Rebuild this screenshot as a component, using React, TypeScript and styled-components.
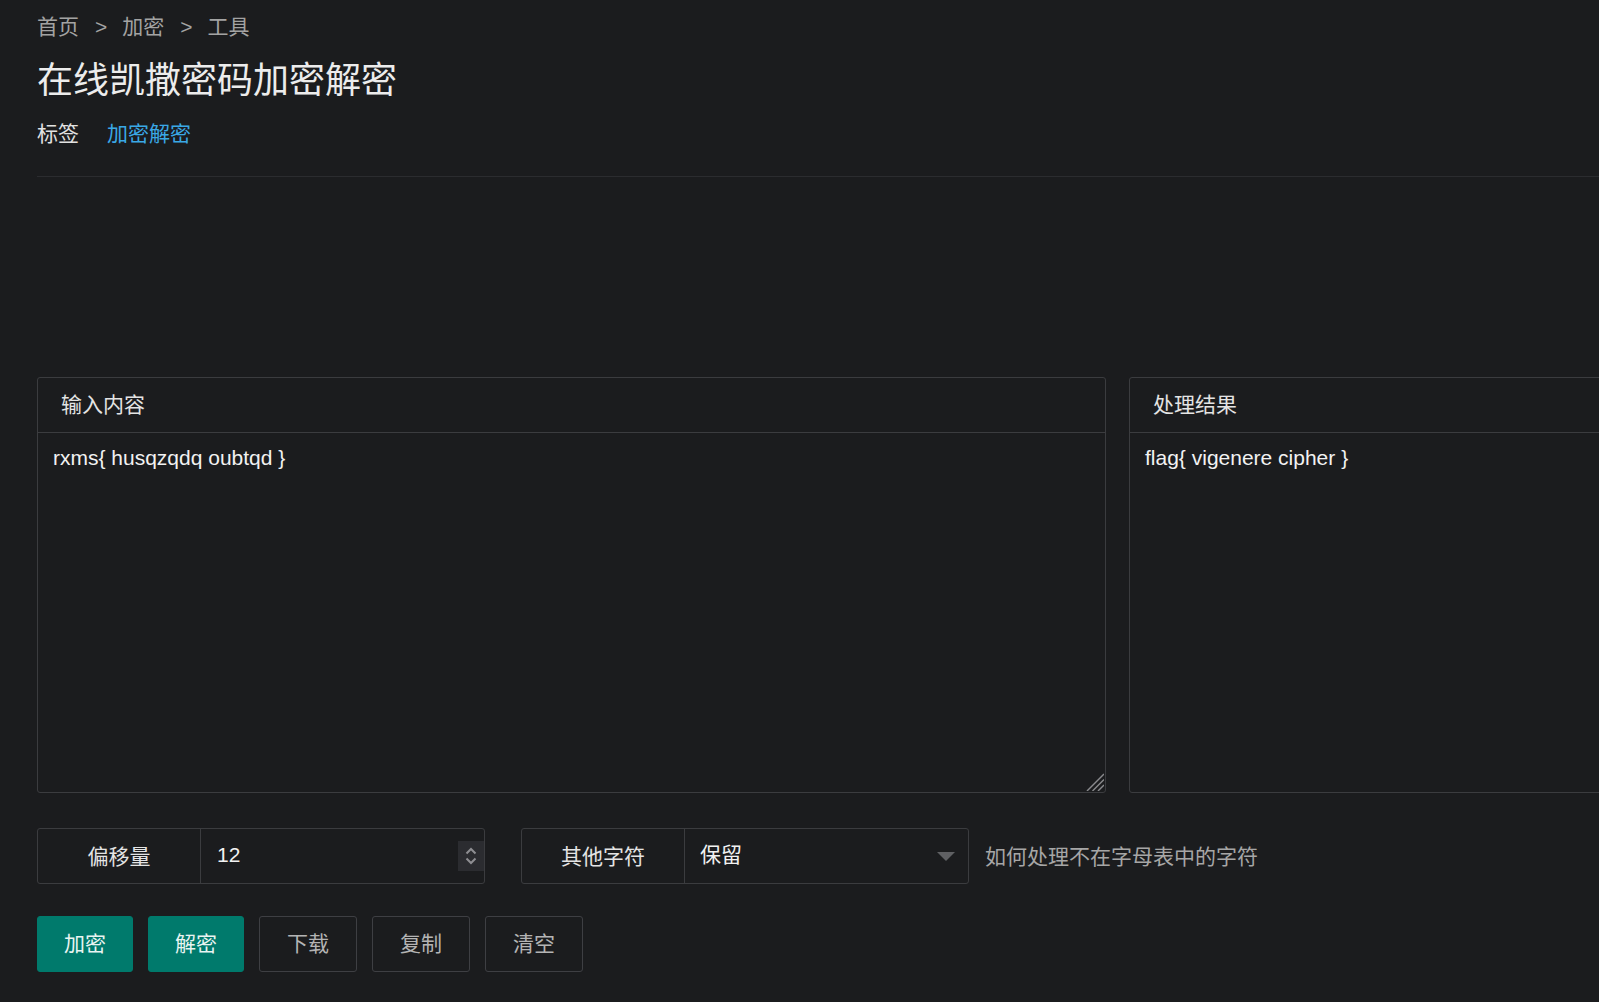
import React from 'react';
import styled, { createGlobalStyle } from 'styled-components';

const GlobalStyle = createGlobalStyle`
  html, body {
    margin: 0;
    padding: 0;
    background: #1b1c1e;
    overflow: hidden;
  }
  body {
    font-family: "Liberation Sans", "Noto Sans CJK SC", sans-serif;
    color: #e6e6e6;
  }
`;

const PANEL_W = 1069;

const Page = styled.div`
  width: ${PANEL_W * 2 + 23}px;
  padding: 11px 0 40px 37px;
`;

const Breadcrumb = styled.nav`
  display: flex;
  align-items: center;
  font-size: 21px;
  line-height: 32px;
  color: #a3a3a3;
`;

const Sep = styled.span`
  margin: 0 15px 0 16px;
`;

const Title = styled.h1`
  margin: 13px 0 0;
  font-size: 36px;
  line-height: 50px;
  font-weight: 400;
  color: #ececec;
`;

const Tags = styled.div`
  display: flex;
  gap: 28px;
  margin-top: 12px;
  font-size: 21px;
  line-height: 32px;
  color: #e2e2e2;
`;

const TagLink = styled.a`
  color: #3aa8e6;
  text-decoration: none;
`;

const Divider = styled.hr`
  margin: 26px 0 0;
  border: 0;
  border-top: 1px solid #2b2c2f;
`;

const AdSlot = styled.div`
  height: 200px;
`;

const Panels = styled.div`
  display: flex;
  gap: 23px;
`;

const Panel = styled.section`
  position: relative;
  width: ${PANEL_W}px;
  height: 416px;
  box-sizing: border-box;
  border: 1px solid #3b3c3f;
  border-radius: 3px;
  display: flex;
  flex-direction: column;
`;

const PanelHeader = styled.header`
  height: 55px;
  flex: none;
  box-sizing: border-box;
  display: flex;
  align-items: center;
  padding: 0 0 5px 23px;
  border-bottom: 1px solid #3b3c3f;
  font-size: 21px;
  color: #e4e4e4;
`;

const InputArea = styled.textarea`
  flex: 1;
  margin: 0;
  border: 0;
  outline: none;
  background: transparent;
  color: #f2f2f2;
  font-family: "Liberation Sans", "Noto Sans CJK SC", sans-serif;
  font-size: 21px;
  line-height: 1.4;
  padding: 10px 15px;
  resize: none;
`;

const Grip = styled.svg`
  position: absolute;
  right: 1px;
  bottom: 1px;
  pointer-events: none;
`;

const Output = styled.div`
  flex: 1;
  padding: 10px 15px;
  font-size: 21px;
  line-height: 1.4;
  color: #f2f2f2;
`;

const Controls = styled.div`
  display: flex;
  align-items: center;
  margin-top: 35px;
`;

const Field = styled.div<{ $gap: number }>`
  display: flex;
  width: 448px;
  height: 56px;
  box-sizing: border-box;
  border: 1px solid #3b3c3f;
  border-radius: 3px;
  margin-right: ${(p) => p.$gap}px;
`;

const FieldLabel = styled.div`
  width: 163px;
  flex: none;
  display: flex;
  align-items: center;
  justify-content: center;
  padding-bottom: 3px;
  box-sizing: border-box;
  border-right: 1px solid #3b3c3f;
  font-size: 21px;
  color: #e4e4e4;
`;

const FieldBody = styled.div`
  flex: 1;
  position: relative;
  display: flex;
  align-items: center;
`;

const NumberInput = styled.input`
  width: 100%;
  height: 100%;
  box-sizing: border-box;
  border: 0;
  outline: none;
  background: transparent;
  padding: 0 40px 2px 16px;
  color: #f2f2f2;
  font-family: "Liberation Sans", "Noto Sans CJK SC", sans-serif;
  font-size: 21px;
`;

const Spinner = styled.div`
  position: absolute;
  right: 0;
  top: 12px;
  width: 26px;
  height: 30px;
  background: #2b2c30;
  display: flex;
  align-items: center;
  justify-content: center;
`;

const Select = styled.select`
  width: 100%;
  height: 100%;
  border: 0;
  outline: none;
  appearance: none;
  background: transparent;
  padding: 0 40px 3px 15px;
  color: #f2f2f2;
  font-family: "Liberation Sans", "Noto Sans CJK SC", sans-serif;
  font-size: 21px;
`;

const Caret = styled.svg`
  position: absolute;
  right: 13px;
  top: 50%;
  margin-top: -4px;
  pointer-events: none;
`;

const Hint = styled.span`
  font-size: 21px;
  padding-bottom: 3px;
  color: #a6a6a6;
`;

const Buttons = styled.div`
  display: flex;
  gap: 15px;
  margin-top: 32px;
`;

const Button = styled.button<{ $primary?: boolean }>`
  height: 56px;
  box-sizing: border-box;
  width: ${(p) => (p.$primary ? 96 : 98)}px;
  padding: 0 0 4px;
  border-radius: 3px;
  border: 1px solid ${(p) => (p.$primary ? '#007a6c' : '#3e3f43')};
  background: ${(p) => (p.$primary ? '#007a6c' : 'transparent')};
  color: ${(p) => (p.$primary ? '#e8f4f2' : '#b4b4b4')};
  font-family: "Liberation Sans", "Noto Sans CJK SC", sans-serif;
  font-size: 21px;
  cursor: pointer;
`;

export default function App() {
  return (
    <>
      <GlobalStyle />
      <Page>
        <Breadcrumb>
          <span>首页</span>
          <Sep>&gt;</Sep>
          <span>加密</span>
          <Sep>&gt;</Sep>
          <span>工具</span>
        </Breadcrumb>
        <Title>在线凯撒密码加密解密</Title>
        <Tags>
          <span>标签</span>
          <TagLink href="#">加密解密</TagLink>
        </Tags>
        <Divider />
        <AdSlot />

        <Panels>
          <Panel>
            <PanelHeader>输入内容</PanelHeader>
            <InputArea defaultValue="rxms{ husqzqdq oubtqd }" />
            <Grip width="20" height="20" viewBox="0 0 20 20">
              <g stroke="#8a8a8d" strokeWidth="1.4">
                <line x1="20" y1="3" x2="3" y2="20" />
                <line x1="20" y1="8.5" x2="8.5" y2="20" />
                <line x1="20" y1="14" x2="14" y2="20" />
              </g>
            </Grip>
          </Panel>
          <Panel>
            <PanelHeader>处理结果</PanelHeader>
            <Output>flag{'{'} vigenere cipher {'}'}</Output>
          </Panel>
        </Panels>

        <Controls>
          <Field $gap={36}>
            <FieldLabel>偏移量</FieldLabel>
            <FieldBody>
              <NumberInput type="text" defaultValue="12" />
              <Spinner>
                <svg width="14" height="22" viewBox="0 0 14 22" fill="none">
                  <path d="M2.5 8.5 L7 4 L11.5 8.5" stroke="#8e8e92" strokeWidth="2" />
                  <path d="M2.5 13.5 L7 18 L11.5 13.5" stroke="#8e8e92" strokeWidth="2" />
                </svg>
              </Spinner>
            </FieldBody>
          </Field>
          <Field $gap={16}>
            <FieldLabel>其他字符</FieldLabel>
            <FieldBody>
              <Select defaultValue="keep">
                <option value="keep">保留</option>
                <option value="drop">删除</option>
              </Select>
              <Caret width="18" height="9" viewBox="0 0 18 9">
                <path d="M0 0 H18 L9 9 Z" fill="#5f6063" />
              </Caret>
            </FieldBody>
          </Field>
          <Hint>如何处理不在字母表中的字符</Hint>
        </Controls>

        <Buttons>
          <Button $primary>加密</Button>
          <Button $primary>解密</Button>
          <Button>下载</Button>
          <Button>复制</Button>
          <Button>清空</Button>
        </Buttons>
      </Page>
    </>
  );
}
